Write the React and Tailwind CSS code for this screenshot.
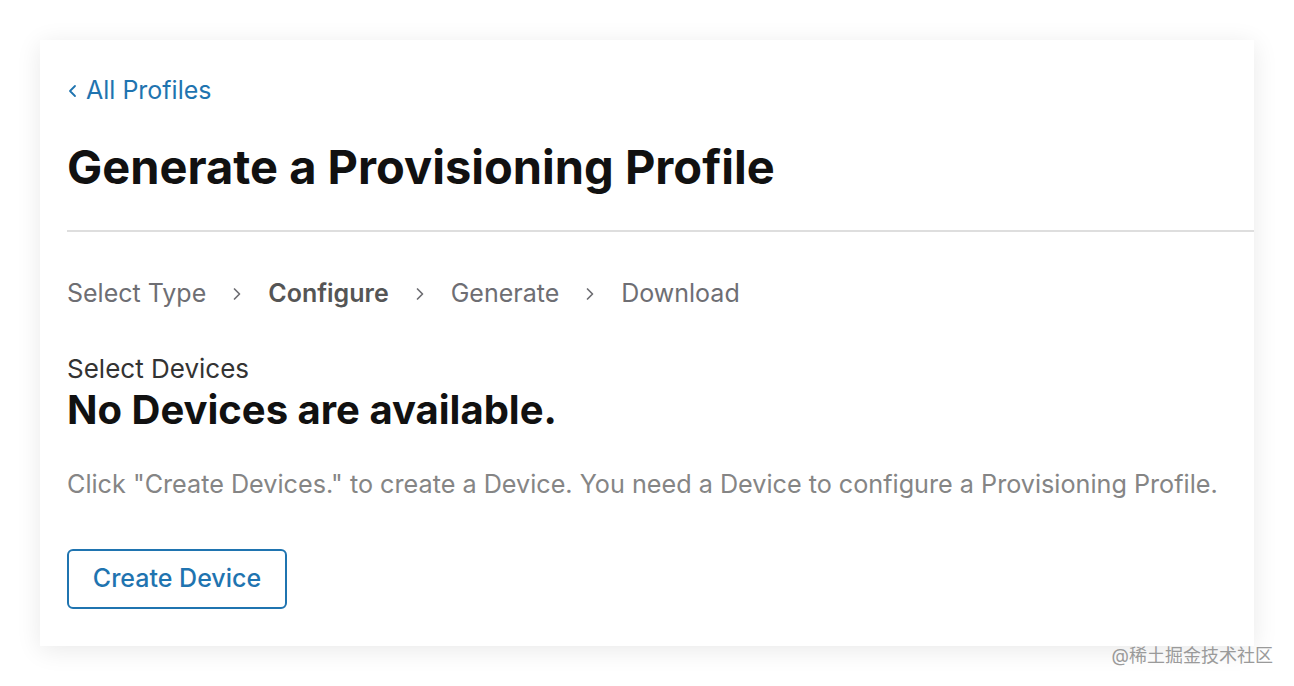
import React from 'react';

const steps = [
    { label: 'Select Type', active: false },
    { label: 'Configure', active: true },
    { label: 'Generate', active: false },
    { label: 'Download', active: false },
];

function Chevron() {
    return (
        <svg className="w-[14px] h-[16px] mx-[24px] text-[#6e6e73]" viewBox="0 0 14 16" fill="none" stroke="currentColor">
            <path d="M4.5 3L9.5 8l-5 5" strokeWidth="1.7" strokeLinecap="round" strokeLinejoin="round" />
        </svg>
    );
}

export default function App() {
    return (
        <div className="relative w-[1294px] h-[686px] bg-white overflow-hidden" style={{ fontFamily: 'Inter, "Noto Sans CJK SC", sans-serif' }}>
            <div className="pt-[40px] pl-[40px] pr-[40px]">
                <div className="bg-white h-[606px] shadow-[0_4px_24px_rgba(0,0,0,0.09)] pl-[27px] pt-[38px] flex flex-col">
                    {/* Back link */}
                    <a className="flex items-center text-[25px] leading-none text-[#1f74b0]">
                        <svg className="w-[12px] h-[14px] mr-[7px]" viewBox="0 0 12 14" fill="none" stroke="currentColor">
                            <path d="M8 2L3 7l5 5" strokeWidth="1.8" strokeLinecap="round" strokeLinejoin="round" />
                        </svg>
                        All Profiles
                    </a>

                    <h1 className="mt-[40px] text-[47px] leading-none font-bold text-[#111]">
                        Generate a Provisioning Profile
                    </h1>

                    <div className="mt-[40px] h-[2px] bg-[#dedede]" />

                    {/* Steps */}
                    <div className="mt-[49px] flex items-center text-[25px] leading-none text-[#6e6e73]">
                        {steps.map((s, i) => (
                            <React.Fragment key={s.label}>
                                {i > 0 && <Chevron />}
                                <span className={s.active ? 'font-semibold text-[#555]' : ''}>{s.label}</span>
                            </React.Fragment>
                        ))}
                    </div>

                    <div className="mt-[50px] text-[26px] leading-none text-[#333]">Select Devices</div>
                    <h2 className="mt-[8px] text-[40px] leading-none font-bold text-[#111]">No Devices are available.</h2>

                    <p className="mt-[42px] text-[25.2px] leading-none text-[#858585]">
                        Click "Create Devices." to create a Device. You need a Device to configure a Provisioning Profile.
                    </p>

                    <div className="mt-[52px]">
                        <button className="h-[60px] w-[220px] rounded-[6px] border-2 border-[#1f74b0] text-[25px] text-[#1f74b0] font-medium">
                            Create Device
                        </button>
                    </div>
                </div>
            </div>
            <div className="absolute right-[21px] top-[647px] text-[18px] leading-none text-[#9a9a9a]">
                @稀土掘金技术社区
            </div>
        </div>
    );
}
